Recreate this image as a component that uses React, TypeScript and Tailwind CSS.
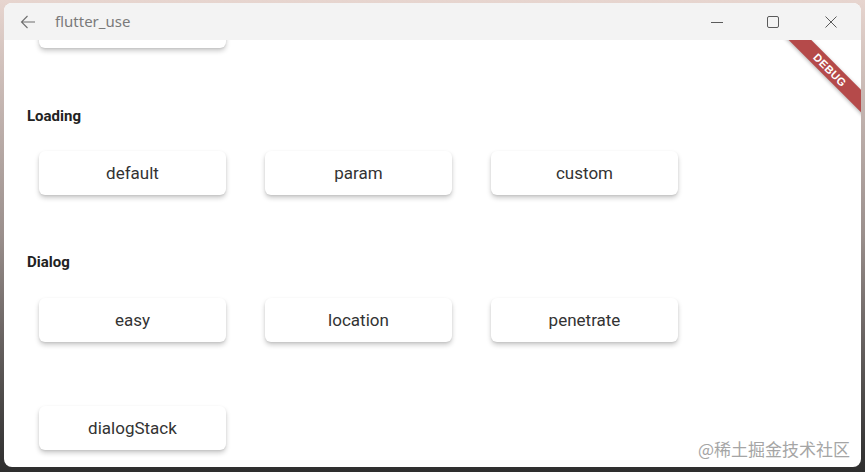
import React from 'react';

const buttonFont = { fontFamily: 'Roboto, "Liberation Sans", sans-serif' };

function DemoButton({ label }: { label?: string }) {
  return (
    <div
      className="w-[187px] h-[44px] shrink-0 rounded-[6px] bg-white flex items-center justify-center pt-[2px] text-[17px] text-[#333] shadow-[0_3px_5px_rgba(0,0,0,0.2),0_1px_2px_rgba(0,0,0,0.08)]"
      style={buttonFont}
    >
      {label}
    </div>
  );
}

function SectionTitle({ title }: { title: string }) {
  return (
    <div
      className="pl-[23px] h-[16px] leading-[16px] text-[15px] font-bold text-[#222]"
      style={buttonFont}
    >
      {title}
    </div>
  );
}

export default function App() {
  return (
    <div className="w-[865px] h-[472px] overflow-hidden bg-gradient-to-b from-[#e7d5cf] via-[#9a8f8c] to-[#2e2e2e] pt-[3px] pl-[4px]">
      <div className="relative w-[857px] h-[464px] rounded-[8px] overflow-hidden bg-white flex flex-col">
        {/* Title bar */}
        <div className="h-[37px] shrink-0 bg-[#f3f3f3] flex items-center">
          <svg className="ml-[16px] w-[16px] h-[16px]" viewBox="0 0 16 16" fill="none" stroke="#6f6f6f" strokeWidth="1.1">
            <path d="M15 8H1.5M7.5 2L1.5 8l6 6" />
          </svg>
          <span
            className="ml-[19px] text-[15px] text-[#7a7a7a]"
            style={{ fontFamily: '"Noto Sans", "Open Sans", sans-serif' }}
          >
            flutter_use
          </span>
          <div className="ml-auto flex items-center h-full">
            <div className="w-[56px] h-full flex items-center justify-center">
              <svg width="12" height="12" viewBox="0 0 12 12" stroke="#5a5a5a" strokeWidth="1">
                <path d="M0 6.5h12" />
              </svg>
            </div>
            <div className="w-[56px] h-full flex items-center justify-center">
              <svg width="12" height="12" viewBox="0 0 12 12" fill="none" stroke="#5a5a5a" strokeWidth="1">
                <rect x="0.5" y="0.5" width="11" height="11" rx="1.5" />
              </svg>
            </div>
            <div className="w-[60px] h-full flex items-center justify-center">
              <svg width="12" height="12" viewBox="0 0 12 12" stroke="#5a5a5a" strokeWidth="1">
                <path d="M0.5 0.5l11 11M11.5 0.5l-11 11" />
              </svg>
            </div>
          </div>
        </div>

        {/* Content, scrolled so the first button is mostly hidden */}
        <div className="relative flex-1 overflow-hidden">
          <div className="flex flex-col mt-[-36px]">
            <div className="pl-[35px]">
              <DemoButton />
            </div>

            <div className="mt-[60px]">
              <SectionTitle title="Loading" />
            </div>
            <div className="mt-[27px] pl-[35px] flex gap-[39px]">
              <DemoButton label="default" />
              <DemoButton label="param" />
              <DemoButton label="custom" />
            </div>

            <div className="mt-[59px]">
              <SectionTitle title="Dialog" />
            </div>
            <div className="mt-[28px] pl-[35px] flex flex-wrap gap-x-[39px] gap-y-[64px] w-[760px]">
              <DemoButton label="easy" />
              <DemoButton label="location" />
              <DemoButton label="penetrate" />
              <DemoButton label="dialogStack" />
            </div>
          </div>

          {/* Debug banner */}
          <div className="absolute top-[22px] right-[-31px] w-[124px] h-[16px] rotate-45 bg-[#b54a4a] flex items-center justify-center shadow-[0_1px_4px_rgba(0,0,0,0.3)]">
            <span
              className="text-[11px] leading-none font-bold text-white tracking-[0.4px]"
              style={{ fontFamily: '"Liberation Sans", Roboto, sans-serif' }}
            >
              DEBUG
            </span>
          </div>

          {/* Watermark */}
          <div
            className="absolute right-[11px] bottom-[6px] text-[17px] text-[#a5a5a5]"
            style={{ fontFamily: '"Noto Sans CJK SC", "Noto Sans", sans-serif' }}
          >
            @稀土掘金技术社区
          </div>
        </div>
      </div>
    </div>
  );
}
